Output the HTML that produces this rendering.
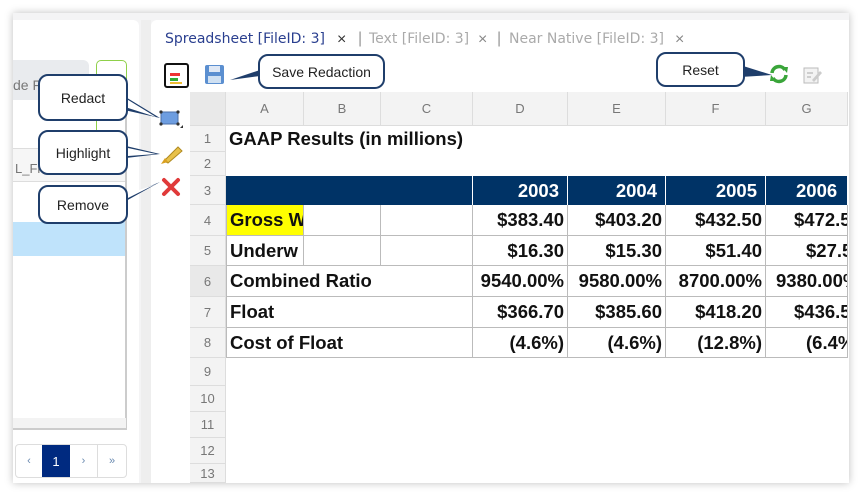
<!DOCTYPE html>
<html><head><style>
*{box-sizing:border-box;margin:0;padding:0}
body{width:860px;height:496px;background:#fff;position:relative;overflow:hidden;font-family:"Liberation Sans",Arial,sans-serif}
.a{position:absolute}
.frame{left:13px;top:13px;width:836px;height:470px;background:#f4f4f5;box-shadow:0 0 8px rgba(0,0,0,.25)}
.lp{left:13px;top:20px;width:126px;height:463px;background:#fff;border-radius:0 6px 0 0}
.mp{left:151px;top:20px;width:698px;height:463px;background:#fff;border-radius:6px 0 0 0}
.call{position:absolute;border:2px solid #1f3e6b;border-radius:10px;background:#fff;font-size:14px;color:#222;display:flex;align-items:center;justify-content:center}
.sheet{position:absolute;left:190px;top:92px;display:grid;grid-template-columns:36px 78px 77px 92px 95px 98px 100px 82px;grid-template-rows:34px 26px 24px 29px 31px 30px 31px 31px 30px 28px 26px 26px 26px 19px;overflow:hidden;width:658px;height:391px}
.sheet div{font-size:18.5px;font-weight:bold;color:#111;white-space:nowrap;overflow:hidden;display:flex;align-items:center}
.sheet .h{background:#f3f3f3;border-right:1px solid #ddd;border-bottom:1px solid #ddd;color:#777;font-weight:normal;font-size:13px;justify-content:center}
.sheet .c{border-right:1px solid #bbb;border-bottom:1px solid #bbb;padding:0 3px}
.sheet .r{justify-content:flex-end}
.sheet .n{background:#003366;color:#fff;border-right:1px solid #fff;justify-content:flex-end;padding:0 8px}
.tab{font-size:14px;font-family:"DejaVu Sans",sans-serif;white-space:nowrap}
</style></head><body>
<div class="a frame"></div>
<div class="a lp"></div>
<div class="a" style="left:13px;top:60px;width:76px;height:40px;background:#e9ebee;border-radius:0 6px 6px 0;color:#777;font-size:14px;padding:17px 0 0 0">de F</div>
<div class="a" style="left:96px;top:60px;width:31px;height:80px;border:1px solid #8fd04a;border-radius:5px"></div>
<div class="a" style="left:13px;top:148px;width:113px;height:34px;background:#f6f6f6;border-top:1px solid #ddd;border-bottom:1px solid #ddd;color:#777;font-size:13px;padding:12px 0 0 2px">L_Fi</div>
<div class="a" style="left:13px;top:222px;width:113px;height:34px;background:#bfe3fb"></div>
<div class="a" style="left:125px;top:100px;width:2px;height:330px;background:#ccc"></div>
<div class="a" style="left:13px;top:418px;width:113px;height:12px;background:#f3f3f3;border-bottom:2px solid #ccc"></div>
<div class="a" style="left:15px;top:444px;width:112px;height:34px;border:1px solid #ddd;border-radius:4px;display:flex;font-size:11px;color:#6a8ab0">
 <div style="width:26px;display:flex;align-items:center;justify-content:center">‹</div>
 <div style="width:28px;background:#002a80;color:#fff;display:flex;align-items:center;justify-content:center;font-size:13px">1</div>
 <div style="width:28px;display:flex;align-items:center;justify-content:center;border-right:1px solid #ddd">›</div>
 <div style="width:28px;display:flex;align-items:center;justify-content:center">»</div>
</div>
<div class="a mp"></div>
<div class="a" style="left:141px;top:20px;width:10px;height:463px;background:#eee"></div>
<div class="a tab" style="left:165px;top:31px;color:#2a3f8f">Spreadsheet [FileID: 3]</div>
<div class="a" style="left:337px;top:31px;font-size:16px;color:#333">×</div>
<div class="a" style="left:358px;top:30px;color:#999;font-size:16px">|</div>
<div class="a tab" style="left:369px;top:31px;color:#aaa">Text [FileID: 3]</div>
<div class="a" style="left:478px;top:31px;font-size:16px;color:#888">×</div>
<div class="a" style="left:497px;top:30px;color:#999;font-size:16px">|</div>
<div class="a tab" style="left:509px;top:31px;color:#aaa">Near Native [FileID: 3]</div>
<div class="a" style="left:675px;top:31px;font-size:16px;color:#888">×</div>
<div class="a" style="left:164px;top:63px;width:25px;height:25px;border:2px solid #111;border-radius:3px;background:#fff">
 <div class="a" style="left:4px;top:8px;width:10px;height:3px;background:#e33"></div>
 <div class="a" style="left:4px;top:13px;width:8px;height:3px;background:#3a3"></div>
 <div class="a" style="left:4px;top:17px;width:12px;height:2px;background:#eb3"></div>
</div>
<svg class="a" style="left:204px;top:64px" width="21" height="21"><rect x="1" y="1" width="19" height="19" rx="2" fill="#5b8fd0"/><rect x="5" y="2" width="11" height="6" fill="#dfe8f5"/><rect x="4" y="12" width="13" height="7" fill="#cfe0f2"/></svg>
<svg class="a" style="left:228px;top:56px" width="34" height="30"><path d="M2 24 L32 20 L32 14 Z" fill="#1f3e6b"/></svg>
<div class="call" style="left:258px;top:54px;width:127px;height:35px">Save Redaction</div>
<svg class="a" style="left:740px;top:55px" width="40" height="30"><path d="M0 10 L32 20 L0 22 Z" fill="#1f3e6b"/></svg>
<div class="call" style="left:656px;top:52px;width:89px;height:35px">Reset</div>
<svg class="a" style="left:769px;top:64px" width="20" height="20"><path d="M3 9 A7 7 0 0 1 16 6" stroke="#3aa53a" stroke-width="3.5" fill="none"/><path d="M17 11 A7 7 0 0 1 4 14" stroke="#3aa53a" stroke-width="3.5" fill="none"/><path d="M13 3 L19 3 L18 9Z M7 17 L1 17 L2 11Z" fill="#3aa53a"/></svg>
<svg class="a" style="left:802px;top:65px" width="20" height="20"><rect x="2" y="3" width="14" height="15" fill="#f3f3f3" stroke="#bbb"/><path d="M5 8h6M5 12h4" stroke="#aaa"/><path d="M10 15 L18 6 L20 8 L12 17Z" fill="#ccc"/></svg>
<svg class="a" style="left:158px;top:109px" width="26" height="22"><rect x="3" y="3" width="17" height="12" fill="#6d9de0" stroke="#4a6fa8"/><circle cx="3" cy="3" r="1.6" fill="#333"/><circle cx="20" cy="3" r="1.6" fill="#333"/><circle cx="3" cy="15" r="1.6" fill="#333"/><circle cx="20" cy="15" r="1.6" fill="#333"/><path d="M22 19 L25 19 L25 16Z" fill="#333"/></svg>
<svg class="a" style="left:160px;top:143px" width="24" height="22"><path d="M4 18 L18 4 L22 8 L8 20Z" fill="#e8c14a" stroke="#b08a20"/><path d="M1 21 L5 15 L8 19Z" fill="#d9a020"/></svg>
<svg class="a" style="left:161px;top:177px" width="20" height="20"><path d="M3 3 L17 17 M17 3 L3 17" stroke="#e03a3a" stroke-width="4" stroke-linecap="round"/></svg>
<svg class="a" style="left:120px;top:90px" width="44" height="120"><path d="M4 6 L40 28 L4 20Z M6 56 L40 64 L6 68Z M4 112 L40 92 L6 106Z" fill="#1f3e6b"/><path d="M5 8 L36 27 L5 17Z M8 58 L36 64 L8 66Z M6 109 L36 94 L8 104Z" fill="#fff"/></svg>
<div class="call" style="left:38px;top:74px;width:90px;height:47px">Redact</div>
<div class="call" style="left:38px;top:130px;width:90px;height:45px">Highlight</div>
<div class="call" style="left:38px;top:185px;width:90px;height:39px">Remove</div>
<div class="sheet">
<div class="h" style="background:#e9e9e9"></div><div class="h">A</div><div class="h">B</div><div class="h">C</div><div class="h">D</div><div class="h">E</div><div class="h">F</div><div class="h">G</div>
<div class="h">1</div><div style="grid-column:2/9;padding:0 3px">GAAP Results (in millions)</div>
<div class="h">2</div><div style="grid-column:2/9"></div>
<div class="h">3</div><div class="n" style="grid-column:2/5"></div><div class="n">2003</div><div class="n">2004</div><div class="n">2005</div><div class="n" style="justify-content:flex-start;padding-left:30px">2006</div>
<div class="h">4</div><div class="c" style="padding:0;border-left:1px solid #bbb"><span style="background:#ff0;height:100%;display:flex;align-items:center;padding:0 3px;width:100%">Gross W</span></div><div class="c"></div><div class="c"></div><div class="c r">$383.40</div><div class="c r">$403.20</div><div class="c r">$432.50</div><div class="c r" style="justify-content:flex-start;padding-left:28px">$472.5</div>
<div class="h">5</div><div class="c" style="border-left:1px solid #bbb">Underw</div><div class="c"></div><div class="c"></div><div class="c r">$16.30</div><div class="c r">$15.30</div><div class="c r">$51.40</div><div class="c r" style="justify-content:flex-start;padding-left:40px">$27.5</div>
<div class="h" style="background:#e9e9e9">6</div><div class="c" style="grid-column:2/5;border-left:1px solid #bbb">Combined Ratio</div><div class="c r">9540.00%</div><div class="c r">9580.00%</div><div class="c r">8700.00%</div><div class="c r" style="justify-content:flex-start;padding-left:10px">9380.00%</div>
<div class="h">7</div><div class="c" style="grid-column:2/5;border-left:1px solid #bbb">Float</div><div class="c r">$366.70</div><div class="c r">$385.60</div><div class="c r">$418.20</div><div class="c r" style="justify-content:flex-start;padding-left:28px">$436.5</div>
<div class="h">8</div><div class="c" style="grid-column:2/5;border-left:1px solid #bbb">Cost of Float</div><div class="c r">(4.6%)</div><div class="c r">(4.6%)</div><div class="c r">(12.8%)</div><div class="c r" style="justify-content:flex-start;padding-left:40px">(6.4%)</div>
<div class="h">9</div><div style="grid-column:2/9"></div>
<div class="h">10</div><div style="grid-column:2/9"></div>
<div class="h">11</div><div style="grid-column:2/9"></div>
<div class="h">12</div><div style="grid-column:2/9"></div>
<div class="h">13</div><div style="grid-column:2/9"></div>
</div>
</body></html>
